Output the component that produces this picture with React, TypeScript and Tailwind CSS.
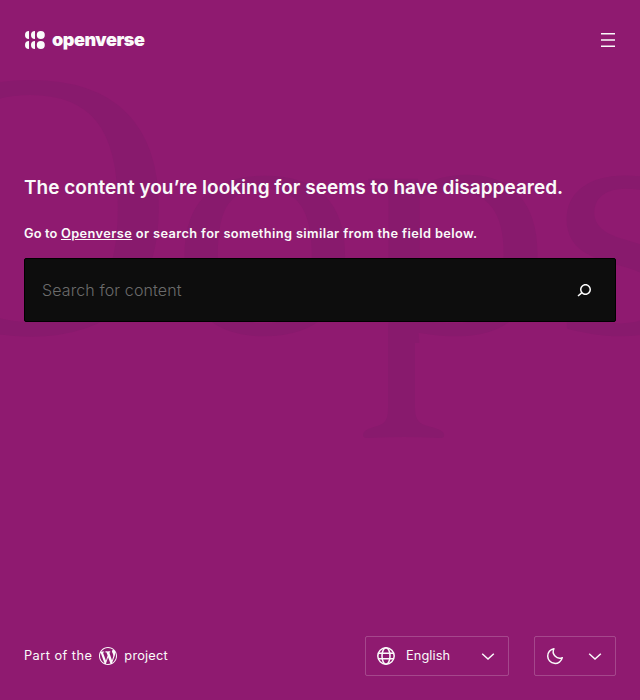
import React from "react";

function Backdrop() {
  return (
    <svg
      className="pointer-events-none absolute inset-0 font-['Liberation_Serif',serif]"
      width="640"
      height="700"
      fill="#881a6d"
      fontSize="100"
      aria-hidden="true"
    >
      <clipPath id="upper">
        <rect x="0" y="-100" width="100" height="103" />
      </clipPath>
      <text transform="translate(-115 333) scale(4.02 3.82)">O</text>
      <text transform="translate(170 333) scale(3.79 3.34)">o</text>
      <g transform="translate(360 333) scale(3.85 3.36)" clipPath="url(#upper)">
        <text>p</text>
      </g>
      <path d="M388 325H415V408C415 427 426 424 440 430C446 433 445 439 440 438Q404 436 367 438C362 438 361 433 368 429C381 424 388 426 388 408Z" />
      <text transform="translate(551 333) scale(3.8 3.34)">s</text>
    </svg>
  );
}

function Logo() {
  return (
    <a href="#" className="flex h-8 items-center text-[#fafafa]" aria-label="Openverse">
      <svg width="21" height="20" viewBox="0 0 21 20" fill="currentColor">
        <path d="M5 1a4 4 0 0 0 0 8zM11 1a4 4 0 0 0 0 8zM5 11a4 4 0 0 0 0 8zM11 11a4 4 0 0 0 0 8z" />
        <circle cx="16.8" cy="5" r="4" />
        <circle cx="16.8" cy="15" r="4" />
      </svg>
      <span className="ml-[7px] text-[18px] font-black leading-none tracking-[-0.45px]">
        openverse
      </span>
    </a>
  );
}

function WordPressMark() {
  return (
    <svg className="mx-[7px]" width="18" height="18" viewBox="0 0 20 20" fill="currentColor" aria-label="WordPress">
      <path d="M20 10c0-5.51-4.49-10-10-10C4.48 0 0 4.49 0 10c0 5.52 4.48 10 10 10 5.51 0 10-4.48 10-10zM7.78 15.37L4.37 6.22c.55-.02 1.17-.08 1.17-.08.5-.06.44-1.13-.06-1.11 0 0-1.45.11-2.37.11-.18 0-.37 0-.58-.01C4.12 2.69 6.87 1.11 10 1.11c2.33 0 4.45.87 6.05 2.34-.68-.11-1.65.39-1.65 1.58 0 .74.45 1.36.9 2.1.35.61.55 1.36.55 2.46 0 1.49-1.4 5-1.4 5l-3.03-8.37c.54-.02.82-.17.82-.17.5-.05.44-1.25-.06-1.22 0 0-1.44.12-2.38.12-.87 0-2.33-.12-2.33-.12-.5-.03-.56 1.2-.06 1.22l.92.08 1.26 3.41zM17.41 10c.24-.64.74-1.87.43-4.25.7 1.29 1.05 2.71 1.05 4.25 0 3.29-1.73 6.24-4.4 7.78.97-2.59 1.94-5.2 2.92-7.78zM6.1 18.09C3.12 16.65 1.11 13.53 1.11 10c0-1.3.23-2.48.72-3.59C3.25 10.3 4.67 14.2 6.1 18.09zm4.03-6.63l2.58 6.98c-.86.29-1.76.45-2.71.45-.79 0-1.57-.11-2.29-.33.81-2.38 1.62-4.74 2.42-7.1z" />
    </svg>
  );
}

function Chevron() {
  return (
    <svg width="24" height="24" viewBox="0 0 24 24" fill="none" stroke="currentColor" strokeWidth="1.5">
      <path d="M6.2 9.8l5.8 5.2 5.8-5.2" />
    </svg>
  );
}

function Globe() {
  return (
    <svg width="24" height="24" viewBox="0 0 24 24" fill="none" stroke="currentColor" strokeWidth="1.5">
      <circle cx="12" cy="12" r="8.2" />
      <ellipse cx="12" cy="12" rx="4" ry="8.2" />
      <path d="M4.5 9.2h15M4.5 14.8h15" />
    </svg>
  );
}

function Moon() {
  return (
    <svg width="24" height="24" viewBox="0 0 24 24" fill="none" stroke="currentColor" strokeWidth="1.5" strokeLinejoin="round">
      <path d="M10.9 4.7A7.4 7.4 0 1 0 19.3 13.7 6.6 6.6 0 0 1 10.9 4.7z" />
    </svg>
  );
}

export default function App() {
  return (
    <div className="relative h-[700px] w-full overflow-hidden bg-[#8f1a70] font-['Inter',sans-serif] text-[#fafafa]">
      <Backdrop />
      <div className="relative flex h-full flex-col px-6">
        <header className="flex h-20 shrink-0 items-center justify-between">
          <Logo />
          <button aria-label="Menu" className="-mr-1">
            <svg width="24" height="24" viewBox="0 0 24 24" fill="currentColor">
              <path d="M5 5h14v1.5H5zM5 11.25h14v1.5H5zM5 17.5h14V19H5z" />
            </svg>
          </button>
        </header>
        <main className="flex-1 pt-[93px]">
          <h1 className="text-[19px] font-semibold leading-[30px] tracking-[0.01px] whitespace-nowrap">
            The content you’re looking for seems to have disappeared.
          </h1>
          <p className="mt-[21px] text-[12.8px] font-semibold leading-[20px] tracking-[0.38px] whitespace-nowrap">
            <span className="tracking-[0.15px]">Go to </span>
            <a href="#" className="tracking-[0.42px] underline">Openverse</a> or search for something similar from the field below.
          </p>
          <form className="mt-[14px] flex h-16 items-center rounded-xs border border-black bg-[#0d0d0d]">
            <input
              className="h-full min-w-0 flex-1 bg-transparent pl-[17px] text-base font-light tracking-[0.12px] outline-none placeholder:text-[#6b6b6b]"
              placeholder="Search for content"
            />
            <button type="button" aria-label="Search" className="mr-[19px]">
              <svg width="24" height="24" viewBox="0 0 24 24" fill="currentColor">
                <path d="M13.5 6C10.5 6 8 8.5 8 11.5c0 1.1.3 2.1.9 3l-3.4 3 1 1.1 3.4-2.9c1 .9 2.2 1.4 3.6 1.4 3 0 5.5-2.5 5.5-5.5C19 8.5 16.5 6 13.5 6zm0 9.5c-2.2 0-4-1.8-4-4s1.8-4 4-4 4 1.8 4 4-1.8 4-4 4z" />
              </svg>
            </button>
          </form>
        </main>
        <footer className="mb-6 flex h-10 shrink-0 items-center justify-between text-[12.8px]">
          <p className="flex items-center">
            <span className="tracking-[0.45px]">Part of the</span>
            <WordPressMark />
            <span className="tracking-[0.2px]">project</span>
          </p>
          <div className="flex gap-[25px]">
            <button className="flex h-10 w-36 items-center rounded-xs border border-white/20 px-2">
              <Globe />
              <span className="ml-2 flex-1 text-left tracking-[0.08px]">English</span>
              <Chevron />
            </button>
            <button aria-label="Theme" className="flex h-10 w-[82px] items-center justify-between rounded-xs border border-white/20 px-2">
              <Moon />
              <Chevron />
            </button>
          </div>
        </footer>
      </div>
    </div>
  );
}
